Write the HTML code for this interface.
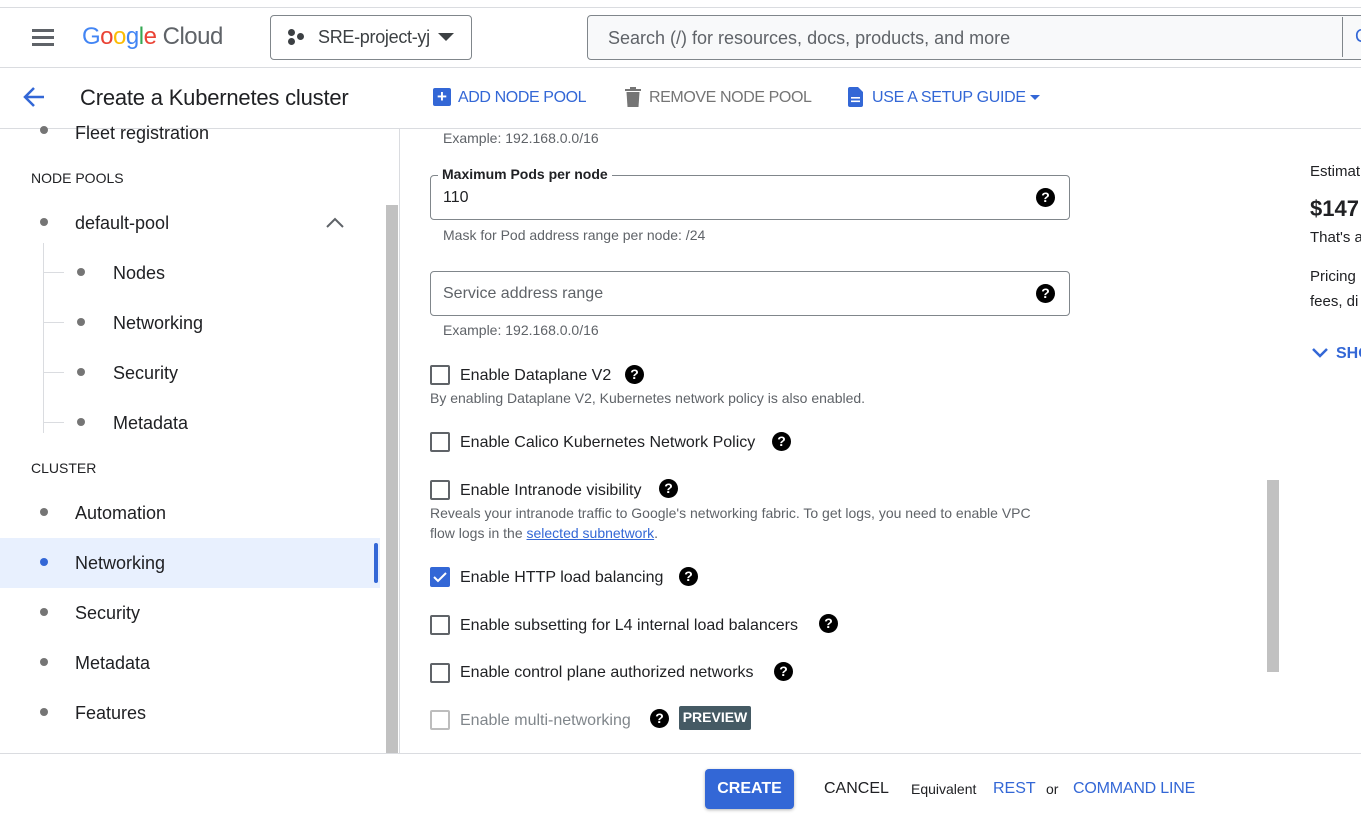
<!DOCTYPE html>
<html><head><meta charset="utf-8"><style>
*{margin:0;padding:0;box-sizing:border-box}
body{width:1361px;height:819px;overflow:hidden;background:#fff;font-family:"Liberation Sans",Roboto,sans-serif;color:#202124;position:relative}
.a{position:absolute;white-space:nowrap}
.q{position:absolute;width:19px;height:19px;border-radius:50%;background:#000;color:#fff;font-weight:bold;font-size:14px;text-align:center;line-height:19px}
.nav{font-size:18px;color:#202124}
.dot{position:absolute;width:8px;height:8px;border-radius:50%;background:#757575}
.cb{position:absolute;width:20px;height:20px;border:2px solid #5f6368;border-radius:2px}
.lbl{position:absolute;font-size:16px;color:#202124;white-space:nowrap}
.hint{position:absolute;font-size:14px;color:#5f6368;white-space:nowrap}
.blue{color:#3367d6}
</style></head><body>
<div class="a" style="left:0;top:7px;width:1361px;height:1px;background:#dadce0"></div>
<div class="a" style="left:32px;top:29px;width:22px;height:3px;background:#5f6368;box-shadow:0 7px 0 #5f6368,0 14px 0 #5f6368"></div>
<div class="a" style="left:82px;top:23px;font-size:24px;letter-spacing:-0.5px"><span style="color:#4285f4">G</span><span style="color:#ea4335">o</span><span style="color:#fbbc05">o</span><span style="color:#4285f4">g</span><span style="color:#34a853">l</span><span style="color:#ea4335">e</span> <span style="color:#5f6368">Cloud</span></div>
<div class="a" style="left:270px;top:15px;width:202px;height:45px;border:1px solid #80868b;border-radius:4px"></div>
<div class="a" style="left:288px;top:29px;width:7px;height:7px;border-radius:50%;background:#3c4043;box-shadow:9px 4px 0 #3c4043,0 9px 0 #3c4043"></div>
<div class="a" style="left:318px;top:27px;font-size:18px;color:#3c4043;letter-spacing:-0.3px">SRE-project-yj</div>
<div class="a" style="left:438px;top:33px;border-left:8px solid transparent;border-right:8px solid transparent;border-top:8px solid #3c4043"></div>
<div class="a" style="left:587px;top:15px;width:790px;height:45px;border:1px solid #80868b;border-radius:4px;background:#f8f9fa"></div>
<div class="a" style="left:1342px;top:17px;width:1px;height:40px;background:#80868b"></div>
<div class="a" style="left:608px;top:28px;font-size:18px;color:#5f6368">Search (/) for resources, docs, products, and more</div>
<div class="a blue" style="left:1355px;top:26px;font-size:18px">C</div>
<div class="a" style="left:0;top:67px;width:1361px;height:1px;background:#dadce0"></div>
<svg class="a" style="left:22px;top:85px" width="26" height="24" viewBox="0 0 26 24"><path d="M22 12H4M12 3L3 12l9 9" stroke="#3367d6" stroke-width="2.5" fill="none"/></svg>
<div class="a" style="left:80px;top:85px;font-size:22px;color:#202124;letter-spacing:-0.2px">Create a Kubernetes cluster</div>
<div class="a" style="left:433px;top:88px;width:18px;height:18px;background:#3367d6;border-radius:2px;color:#fff;font-weight:bold;text-align:center;line-height:18px;font-size:17px">+</div>
<div class="a blue" style="left:458px;top:89px;font-size:16px;letter-spacing:-0.4px">ADD NODE POOL</div>
<svg class="a" style="left:625px;top:87px" width="16" height="20" viewBox="0 0 16 20"><rect x="0" y="2" width="16" height="2" fill="#757575"/><rect x="5" y="0" width="6" height="3" fill="#757575"/><path d="M1.5 5h13l-1 15h-11z" fill="#757575"/></svg>
<div class="a" style="left:649px;top:89px;font-size:16px;color:#757575;letter-spacing:-0.4px">REMOVE NODE POOL</div>
<svg class="a" style="left:848px;top:87px" width="15" height="20" viewBox="0 0 15 20"><path d="M0 2a2 2 0 012-2h8l5 5v13a2 2 0 01-2 2H2a2 2 0 01-2-2z" fill="#3367d6"/><rect x="3" y="10" width="9" height="1.6" fill="#fff"/><rect x="3" y="13.5" width="9" height="1.6" fill="#fff"/></svg>
<div class="a blue" style="left:872px;top:89px;font-size:16px;letter-spacing:-0.3px">USE A SETUP GUIDE</div>
<div class="a" style="left:1030px;top:95px;border-left:5px solid transparent;border-right:5px solid transparent;border-top:5px solid #3367d6"></div>
<div class="a" style="left:0;top:128px;width:1361px;height:1px;background:#dadce0"></div>
<div class="dot" style="left:40px;top:126px"></div>
<div class="a nav" style="left:75px;top:123px">Fleet registration</div>
<div class="a" style="left:31px;top:170px;font-size:14px;color:#202124">NODE POOLS</div>
<div class="dot" style="left:40px;top:218px"></div>
<div class="a nav" style="left:75px;top:213px">default-pool</div>
<svg class="a" style="left:325px;top:217px" width="20" height="12"><path d="M2 10l8-8 8 8" stroke="#5f6368" stroke-width="2" fill="none"/></svg>
<div class="a" style="left:43px;top:243px;width:1px;height:190px;background:#dadce0"></div>
<div class="a" style="left:43px;top:272px;width:21px;height:1px;background:#dadce0"></div>
<div class="a" style="left:43px;top:322px;width:21px;height:1px;background:#dadce0"></div>
<div class="a" style="left:43px;top:372px;width:21px;height:1px;background:#dadce0"></div>
<div class="a" style="left:43px;top:422px;width:21px;height:1px;background:#dadce0"></div>
<div class="dot" style="left:77px;top:268px"></div><div class="a nav" style="left:113px;top:263px">Nodes</div>
<div class="dot" style="left:77px;top:318px"></div><div class="a nav" style="left:113px;top:313px">Networking</div>
<div class="dot" style="left:77px;top:368px"></div><div class="a nav" style="left:113px;top:363px">Security</div>
<div class="dot" style="left:77px;top:418px"></div><div class="a nav" style="left:113px;top:413px">Metadata</div>
<div class="a" style="left:31px;top:460px;font-size:14px;color:#202124">CLUSTER</div>
<div class="dot" style="left:40px;top:508px"></div><div class="a nav" style="left:75px;top:503px">Automation</div>
<div class="a" style="left:0;top:538px;width:380px;height:50px;background:#e8f0fe"></div>
<div class="a" style="left:374px;top:543px;width:4px;height:40px;background:#3367d6;border-radius:2px"></div>
<div class="dot" style="left:40px;top:558px;background:#3367d6"></div><div class="a nav" style="left:75px;top:553px">Networking</div>
<div class="dot" style="left:40px;top:608px"></div><div class="a nav" style="left:75px;top:603px">Security</div>
<div class="dot" style="left:40px;top:658px"></div><div class="a nav" style="left:75px;top:653px">Metadata</div>
<div class="dot" style="left:40px;top:708px"></div><div class="a nav" style="left:75px;top:703px">Features</div>
<div class="a" style="left:386px;top:205px;width:12px;height:548px;background:#c1c1c1"></div>
<div class="a" style="left:399px;top:129px;width:1px;height:624px;background:#dadce0"></div>
<div class="hint" style="left:443px;top:130px">Example: 192.168.0.0/16</div>
<div class="a" style="left:430px;top:175px;width:640px;height:45px;border:1px solid #80868b;border-radius:4px"></div>
<div class="a" style="left:438px;top:166px;background:#fff;padding:0 4px;font-size:14px;font-weight:bold;color:#202124">Maximum Pods per node</div>
<div class="a" style="left:443px;top:189px;font-size:16px">110</div>
<div class="q" style="left:1036px;top:188px">?</div>
<div class="hint" style="left:443px;top:227px">Mask for Pod address range per node: /24</div>
<div class="a" style="left:430px;top:271px;width:640px;height:45px;border:1px solid #80868b;border-radius:4px"></div>
<div class="a" style="left:443px;top:285px;font-size:16px;color:#5f6368">Service address range</div>
<div class="q" style="left:1036px;top:284px">?</div>
<div class="hint" style="left:443px;top:322px">Example: 192.168.0.0/16</div>
<div class="cb" style="left:430px;top:365px"></div><div class="lbl" style="left:460px;top:367px">Enable Dataplane V2</div><div class="q" style="left:625px;top:365px">?</div>
<div class="hint" style="left:430px;top:390px">By enabling Dataplane V2, Kubernetes network policy is also enabled.</div>
<div class="cb" style="left:430px;top:432px"></div><div class="lbl" style="left:460px;top:434px">Enable Calico Kubernetes Network Policy</div><div class="q" style="left:772px;top:432px">?</div>
<div class="cb" style="left:430px;top:480px"></div><div class="lbl" style="left:460px;top:482px">Enable Intranode visibility</div><div class="q" style="left:659px;top:479px">?</div>
<div class="hint" style="left:430px;top:503px;line-height:20px">Reveals your intranode traffic to Google's networking fabric. To get logs, you need to enable VPC<br>flow logs in the <span class="blue" style="text-decoration:underline">selected subnetwork</span>.</div>
<div class="a" style="left:430px;top:567px;width:20px;height:20px;background:#3367d6;border-radius:2px"></div>
<svg class="a" style="left:430px;top:567px" width="20" height="20"><path d="M4 10l4 4 8-8" stroke="#fff" stroke-width="2" fill="none"/></svg>
<div class="lbl" style="left:460px;top:569px">Enable HTTP load balancing</div><div class="q" style="left:679px;top:567px">?</div>
<div class="cb" style="left:430px;top:615px"></div><div class="lbl" style="left:460px;top:617px">Enable subsetting for L4 internal load balancers</div><div class="q" style="left:819px;top:614px">?</div>
<div class="cb" style="left:430px;top:663px"></div><div class="lbl" style="left:460px;top:664px">Enable control plane authorized networks</div><div class="q" style="left:774px;top:662px">?</div>
<div class="cb" style="left:430px;top:710px;border-color:#bdbdbd"></div><div class="lbl" style="left:460px;top:712px;color:#80868b">Enable multi-networking</div><div class="q" style="left:650px;top:709px">?</div>
<div class="a" style="left:679px;top:706px;width:72px;height:24px;background:#455a64;border-radius:2px;color:#fff;font-size:14px;font-weight:bold;text-align:center;line-height:22px">PREVIEW</div>
<div class="a" style="left:1267px;top:480px;width:12px;height:192px;background:#c1c1c1"></div>
<div class="a" style="left:1310px;top:163px;font-size:15px">Estimat</div>
<div class="a" style="left:1310px;top:196px;font-size:22px;font-weight:bold">$147</div>
<div class="a" style="left:1310px;top:229px;font-size:15px">That's a</div>
<div class="a" style="left:1310px;top:264px;font-size:15px;line-height:25px">Pricing<br>fees, di</div>
<svg class="a" style="left:1311px;top:347px" width="18" height="12"><path d="M2 2l7 7 7-7" stroke="#3367d6" stroke-width="2.5" fill="none"/></svg>
<div class="a blue" style="left:1336px;top:345px;font-size:16px;font-weight:bold">SHO</div>
<div class="a" style="left:0;top:753px;width:1361px;height:1px;background:#dadce0"></div>
<div class="a" style="left:705px;top:769px;width:89px;height:40px;background:#3367d6;border-radius:4px;color:#fff;font-weight:bold;font-size:16px;text-align:center;line-height:40px;box-shadow:0 1px 3px rgba(0,0,0,.3)">CREATE</div>
<div class="a" style="left:824px;top:780px;font-size:16px;color:#202124">CANCEL</div>
<div class="a" style="left:911px;top:781px;font-size:14px">Equivalent</div>
<div class="a blue" style="left:993px;top:780px;font-size:16px">REST</div>
<div class="a" style="left:1046px;top:781px;font-size:14px">or</div>
<div class="a blue" style="left:1073px;top:780px;font-size:16px;letter-spacing:-0.2px">COMMAND LINE</div>
</body></html>
